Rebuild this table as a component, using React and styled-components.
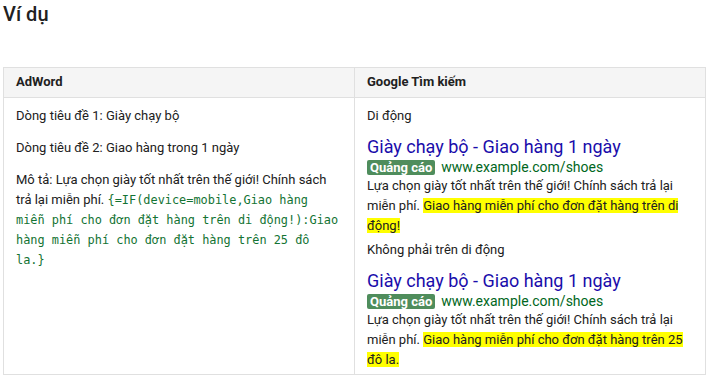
import React from 'react';
import styled, { createGlobalStyle } from 'styled-components';

const GlobalStyle = createGlobalStyle`
  body {
    margin: 0;
    background: #fff;
    font-family: Roboto, "Noto Sans", Arial, sans-serif;
    color: #212121;
  }
`;

const Page = styled.div`
  padding: 0 11px 0 3px;
`;

const Title = styled.h2`
  margin: 0 0 39px;
  font-size: 20px;
  line-height: 28px;
  font-weight: 500;
  color: #212121;
`;

const Table = styled.table`
  width: 703px;
  border-collapse: collapse;
  table-layout: fixed;
  border: 1px solid #e0e0e0;
  font-size: 13px;
  line-height: 20px;
`;

const Th = styled.th`
  text-align: left;
  font-weight: 700;
  background: #f5f5f5;
  border: 1px solid #e0e0e0;
  padding: 4px 12px 5px;
`;

const Td = styled.td`
  vertical-align: top;
  border: 1px solid #e0e0e0;
  padding: 8px 12px 4px;
`;

const P = styled.p`
  margin: 0 0 ${p => p.$gap ?? 12}px;
  &:last-child {
    margin-bottom: 0;
  }
`;

const Code = styled.code`
  font-family: "DejaVu Sans Mono", "Liberation Mono", monospace;
  font-size: 11.9px;
  color: #137333;
`;

const Ad = styled.div`
  margin-bottom: 4px;
  &:last-child {
    margin-bottom: 0;
  }
`;

const AdTitle = styled.div`
  font-size: 18px;
  line-height: 22px;
  color: #1a0dab;
`;

const AdLine = styled.div`
  display: flex;
  align-items: center;
  gap: 6px;
  height: 18px;
`;

const Badge = styled.span`
  background: #4f8d5c;
  color: #fff;
  font-weight: 700;
  font-size: 13px;
  line-height: 15px;
  padding: 0 3px;
  border-radius: 2px;
`;

const Url = styled.span`
  font-size: 14px;
  color: #006621;
`;

const Mark = styled.span`
  background: #ffff00;
`;

const AdPreview = ({ highlight }) => (
  <Ad>
    <AdTitle>Giày chạy bộ - Giao hàng 1 ngày</AdTitle>
    <AdLine>
      <Badge>Quảng cáo</Badge>
      <Url>www.example.com/shoes</Url>
    </AdLine>
    <div>
      Lựa chọn giày tốt nhất trên thế giới! Chính sách trả lại miễn phí.{' '}
      <Mark>{highlight}</Mark>
    </div>
  </Ad>
);

const App = () => (
  <Page>
    <GlobalStyle />
    <Title>Ví dụ</Title>
    <Table>
      <thead>
        <tr>
          <Th>AdWord</Th>
          <Th>Google Tìm kiếm</Th>
        </tr>
      </thead>
      <tbody>
        <tr>
          <Td>
            <P>Dòng tiêu đề 1: Giày chạy bộ</P>
            <P>Dòng tiêu đề 2: Giao hàng trong 1 ngày</P>
            <P>
              Mô tả: Lựa chọn giày tốt nhất trên thế giới! Chính sách trả lại miễn phí.{' '}
              <Code>
                {'{=IF(device=mobile,Giao hàng miễn phí cho đơn đặt hàng trên di động!):Giao hàng miễn phí cho đơn đặt hàng trên 25 đô la.}'}
              </Code>
            </P>
          </Td>
          <Td>
            <P $gap={10}>Di động</P>
            <AdPreview highlight="Giao hàng miễn phí cho đơn đặt hàng trên di động!" />
            <P $gap={10}>Không phải trên di động</P>
            <AdPreview highlight="Giao hàng miễn phí cho đơn đặt hàng trên 25 đô la." />
          </Td>
        </tr>
      </tbody>
    </Table>
  </Page>
);

export default App;
